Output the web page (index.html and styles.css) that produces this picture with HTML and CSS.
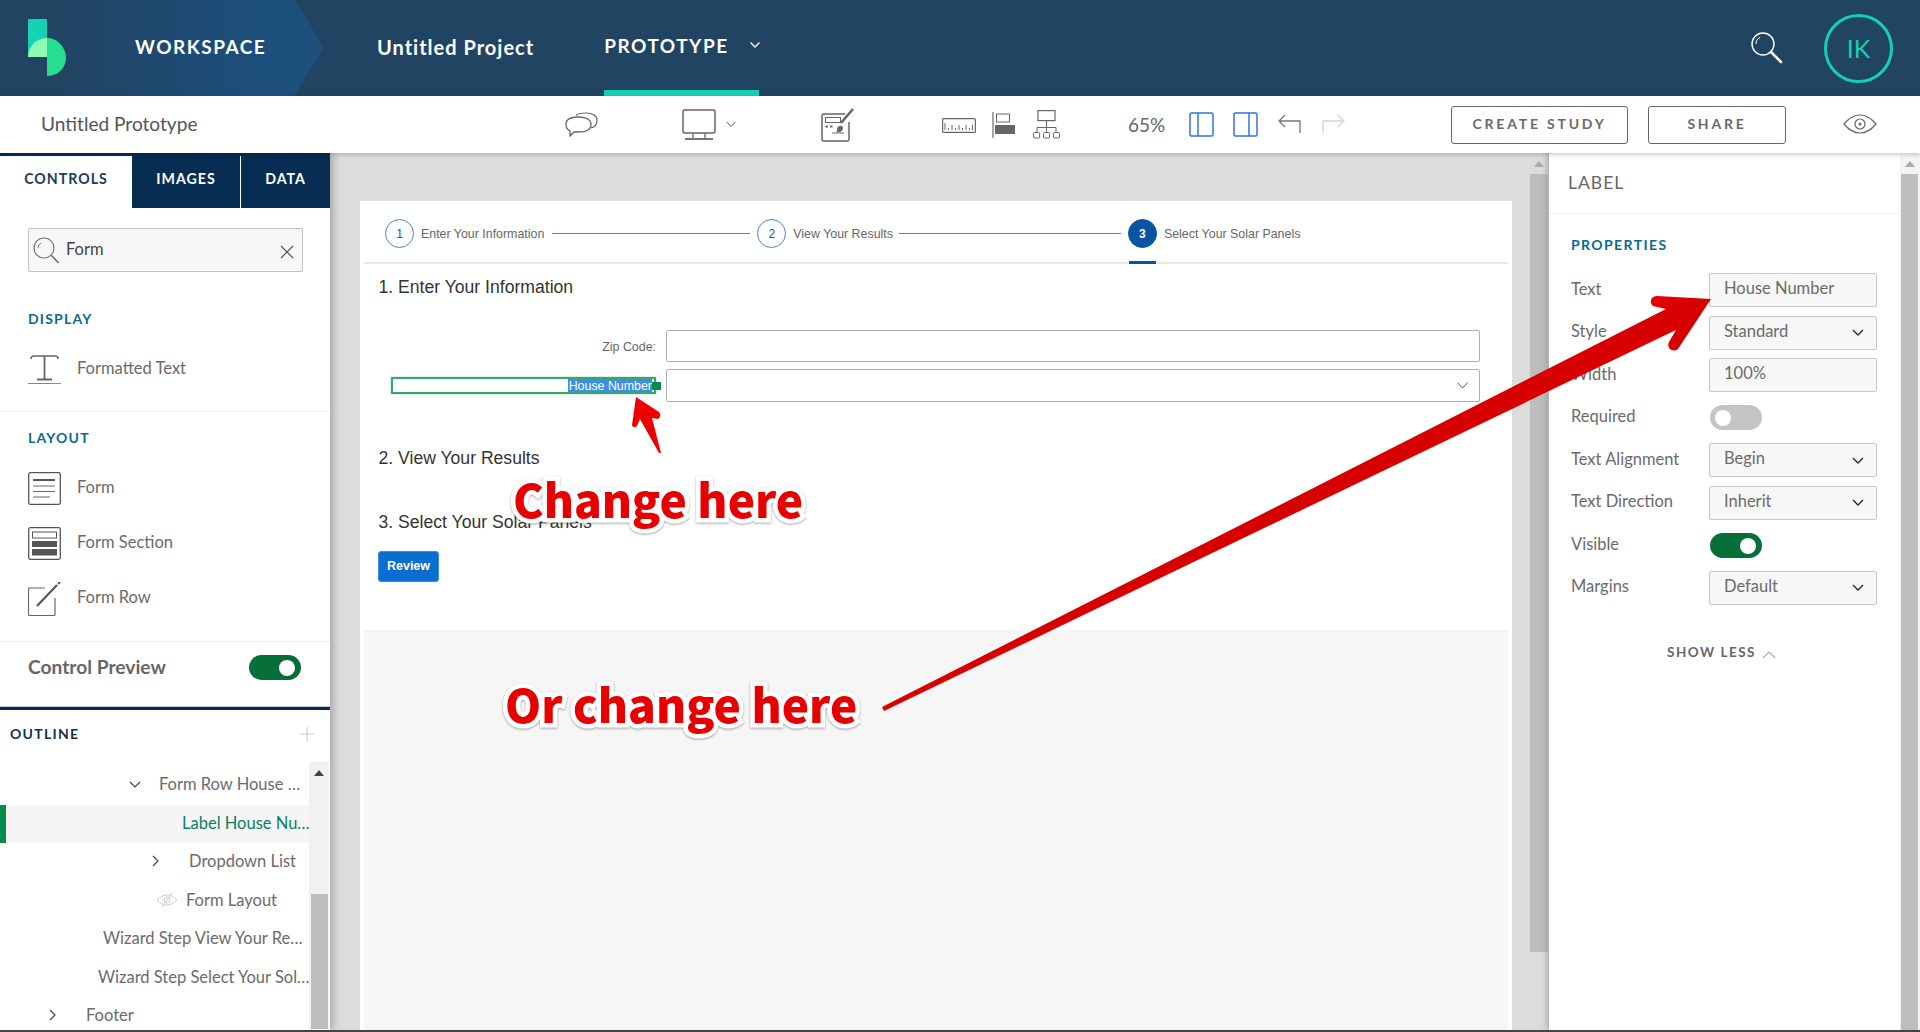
FILE: index.html
```html
<!DOCTYPE html>
<html lang="en">
<head>
<meta charset="utf-8">
<title>Untitled Prototype</title>
<link rel="stylesheet" href="styles.css">
</head>
<body>
<div class="app">
  <header class="topbar">
    <div class="brand">
      <svg class="logo" width="38" height="57" viewBox="0 0 38 57"><rect width="19" height="38" rx="1" fill="#14d3b4"/><path d="M19 19A19 19 0 0 0 0 38H19Z" fill="#8efab0"/><path d="M19 19C30 19 38 29 38 39C38 49 30 57 19 57Z" fill="#27dd90"/></svg>
      <span class="brand-name">WORKSPACE</span>
    </div>
    <span class="project">Untitled Project</span>
    <div class="proto-tab"><span>PROTOTYPE</span><svg width="12" height="8" viewBox="0 0 12 8"><path d="M1.500 1.500 6 6l4.500-4.500" fill="none" stroke="#fff" stroke-width="1.300"/></svg></div>
    <svg class="top-search" width="33" height="33" viewBox="0 0 33 33"><circle cx="13" cy="13" r="11" fill="none" stroke="#fff" stroke-width="1.400"/><path d="M6 13a7 7 0 0 1 4-6.500" fill="none" stroke="#fff" stroke-width="1"/><path d="M21 21 31 31" stroke="#fff" stroke-width="2.600" stroke-linecap="round"/></svg>
    <div class="avatar">IK</div>
  </header>

  <div class="toolbar">
    <span class="doc-title">Untitled Prototype</span>
    <svg class="i-comment" width="33" height="25" viewBox="0 0 33 25"><path d="M11 3.500C13 1.500 16 1 21 1c7 0 11 3 11 7 0 4-2 7-6 8" fill="none" stroke="#666" stroke-width="1.200"/><path d="M13 5c7 0 13 2 13 7.500S20 20 13 20H9l-4 4v-5C2 17.500 1 15 1 12.500 1 7 6 5 13 5Z" fill="#fff" stroke="#666" stroke-width="1.300"/></svg>
    <svg class="i-monitor" width="34" height="31" viewBox="0 0 34 31"><rect x="1" y="1" width="32" height="23" rx="1.500" fill="none" stroke="#666" stroke-width="1.500"/><path d="M11 24v6M23 24v6" stroke="#666" stroke-width="1.300"/><path d="M3 30h28" stroke="#666" stroke-width="1.800"/></svg>
    <svg class="i-caret" width="10" height="7" viewBox="0 0 10 7"><path d="M.8 1 5 5.500 9.200 1" fill="none" stroke="#555" stroke-width="1"/></svg>
    <svg class="i-paint" width="33" height="34" viewBox="0 0 33 34"><path d="M28 14v17.500a1.500 1.500 0 0 1-1.500 1.500H2.500A1.500 1.500 0 0 1 1 31.500V7.500A1.500 1.500 0 0 1 2.500 6H24" fill="none" stroke="#666" stroke-width="1.500"/><rect x="4.500" y="9.500" width="15" height="5" fill="none" stroke="#666"/><path d="M4.500 18.500h2.500M9 18.500h2.500" stroke="#666" stroke-width="2"/><path d="M32 1 20 15" stroke="#666" stroke-width="2.600"/><path d="M16 20c2-3 6-3 6 0 0 3-3 5-7 4 2-1 1-2 1-4Z" fill="#666"/><path d="M11 25h12" stroke="#666"/></svg>
    <svg class="i-ruler" width="34" height="15" viewBox="0 0 34 15"><rect x=".6" y=".6" width="32.800" height="13.800" rx="1" fill="none" stroke="#666" stroke-width="1.200"/><path d="M3 5v7M6.500 10v2M10 7v5M13.500 10v2M17 7v5M20.500 10v2M24 7v5M27.500 10v2M30.500 7v5" stroke="#666"/></svg>
    <svg class="i-align" width="23" height="26" viewBox="0 0 23 26"><path d="M1 0v26" stroke="#777" stroke-width="1.300"/><rect x="4.500" y="2" width="13" height="8" fill="none" stroke="#666"/><rect x="3" y="13" width="20" height="9" fill="#666"/></svg>
    <svg class="i-sitemap" width="27" height="29" viewBox="0 0 27 29"><rect x="5" y=".6" width="17" height="10" fill="none" stroke="#666" stroke-width="1.200"/><path d="M13.500 11v6M4 22v-4.500h19V22M13.500 17v5" fill="none" stroke="#666"/><rect x=".6" y="22.500" width="6" height="5.500" rx="1" fill="none" stroke="#666"/><rect x="10.500" y="22.500" width="6" height="5.500" rx="1" fill="none" stroke="#666"/><rect x="20.400" y="22.500" width="6" height="5.500" rx="1" fill="none" stroke="#666"/></svg>
    <span class="zoom-pct">65%</span>
    <svg class="i-panel-l" width="25" height="25" viewBox="0 0 25 25"><rect x="1" y="1" width="23" height="23" rx="1.500" fill="none" stroke="#2f75e0" stroke-width="1.500"/><path d="M9 1v23" stroke="#2f75e0" stroke-width="1.500"/></svg>
    <svg class="i-panel-r" width="25" height="25" viewBox="0 0 25 25"><rect x="1" y="1" width="23" height="23" rx="1.500" fill="none" stroke="#2f75e0" stroke-width="1.500"/><path d="M16 1v23" stroke="#2f75e0" stroke-width="1.500"/></svg>
    <svg class="i-undo" width="23" height="20" viewBox="0 0 23 20"><path d="M22 19V7H1M7 1 1 7l6 6" fill="none" stroke="#777" stroke-width="1.300"/></svg>
    <svg class="i-redo" width="23" height="20" viewBox="0 0 23 20"><path d="M1 19V7h21M16 1l6 6-6 6" fill="none" stroke="#d4d4d4" stroke-width="1.300"/></svg>
    <button class="tool-btn btn-study">CREATE STUDY</button>
    <button class="tool-btn btn-share">SHARE</button>
    <svg class="i-eye" width="34" height="20" viewBox="0 0 34 20"><path d="M1 10C6 4 11 1 17 1s11 3 16 9c-5 6-10 9-16 9S6 16 1 10Z" fill="none" stroke="#666" stroke-width="1.200"/><circle cx="17" cy="10" r="5" fill="none" stroke="#666" stroke-width="1.200"/><circle cx="17" cy="10" r="1.500" fill="#3a6fc0"/></svg>
  </div>

  <main class="workspace">
    <aside class="sidebar">
      <div class="tabs">
        <span class="tab tab-controls">CONTROLS</span>
        <span class="tab tab-images">IMAGES</span>
        <span class="tab tab-data">DATA</span>
      </div>
      <div class="search-wrap">
        <div class="search-box">
          <svg width="26" height="27" viewBox="0 0 26 27"><circle cx="11" cy="11" r="10" fill="none" stroke="#777" stroke-width="1.200"/><path d="M5 11a6 6 0 0 1 3-5" fill="none" stroke="#777"/><path d="m18 18 7.500 8" stroke="#777" stroke-width="1.800"/></svg>
          <span class="search-text">Form</span>
          <svg class="search-x" width="14" height="14" viewBox="0 0 14 14"><path d="m1 1 12 12M13 1 1 13" stroke="#555" stroke-width="1.200"/></svg>
        </div>
      </div>
      <section class="group group-display">
        <h3 class="group-title">DISPLAY</h3>
        <div class="ctrl">
          <svg width="33" height="32" viewBox="0 0 33 32"><path d="M3 6c0-2 1-3 3-3h21c2 0 3 1 3 3" fill="none" stroke="#666" stroke-width="1.500"/><path d="M16.500 3v23" stroke="#666" stroke-width="1.800"/><path d="M9 26.500h15" stroke="#666" stroke-width="2"/><path d="M0 30.500h33" stroke="#888" stroke-width="1.200"/></svg>
          <span>Formatted Text</span>
        </div>
      </section>
      <section class="group group-layout">
        <h3 class="group-title">LAYOUT</h3>
        <div class="ctrl-list">
          <div class="ctrl">
            <svg width="33" height="33" viewBox="0 0 33 33"><rect x=".7" y=".7" width="31.600" height="31.600" rx="1.500" fill="none" stroke="#555" stroke-width="1.300"/><path d="M5 8h22" stroke="#555" stroke-width="2"/><path d="M5 14h22M5 19.500h22M5 25h17" stroke="#666" stroke-width="1.200"/></svg>
            <span>Form</span>
          </div>
          <div class="ctrl">
            <svg width="33" height="33" viewBox="0 0 33 33"><rect x=".7" y=".7" width="31.600" height="31.600" rx="1.500" fill="none" stroke="#555" stroke-width="1.300"/><rect x="4.500" y="5" width="24" height="6" fill="none" stroke="#555"/><rect x="4" y="14" width="25" height="6" fill="#555"/><rect x="4" y="22" width="25" height="6.500" fill="#555"/></svg>
            <span>Form Section</span>
          </div>
          <div class="ctrl">
            <svg width="33" height="34" viewBox="0 0 33 34"><path d="M17 6H1.500a1 1 0 0 0-1 1v25.500a1 1 0 0 0 1 1H26a1 1 0 0 0 1-1V16" fill="none" stroke="#666" stroke-width="1.200"/><path d="M9 24 29 3" stroke="#555" stroke-width="2.200"/><path d="m30 2 2-2" stroke="#555" stroke-width="2"/></svg>
            <span>Form Row</span>
          </div>
        </div>
      </section>
      <div class="preview-row">
        <span class="preview-label">Control Preview</span>
        <span class="switch switch-on"></span>
      </div>
      <div class="outline-head">
        <span class="outline-title">OUTLINE</span>
        <svg width="14" height="14" viewBox="0 0 14 14"><path d="M7 0v14M0 7h14" stroke="#ccc" stroke-width="1.200"/></svg>
      </div>
      <div class="tree">
        <div class="tree-rows">
          <div class="tree-row lvl-formrow"><svg class="tw-open" width="12" height="7" viewBox="0 0 12 7"><path d="M1 1l5 5 5-5" fill="none" stroke="#444" stroke-width="1.200"/></svg><span>Form Row House …</span></div>
          <div class="tree-row tree-active"><span>Label House Nu…</span></div>
          <div class="tree-row lvl-dropdown"><svg class="tw-closed" width="7" height="12" viewBox="0 0 7 12"><path d="M1 1l5 5-5 5" fill="none" stroke="#444" stroke-width="1.200"/></svg><span>Dropdown List</span></div>
          <div class="tree-row lvl-layout"><svg class="tw-eye" width="22" height="16" viewBox="0 0 22 16"><path d="M1 8c3-3 6-5 10-5s7 2 10 5c-3 3-6 5-10 5S4 11 1 8Z" fill="none" stroke="#ccc"/><circle cx="11" cy="8" r="3" fill="none" stroke="#ccc"/><path d="M16 1 6 15" stroke="#ccc"/></svg><span>Form Layout</span></div>
          <div class="tree-row lvl-view"><span>Wizard Step View Your Re…</span></div>
          <div class="tree-row lvl-select"><span>Wizard Step Select Your Sol…</span></div>
          <div class="tree-row lvl-footer"><svg class="tw-footer" width="7" height="12" viewBox="0 0 7 12"><path d="M1 1l5 5-5 5" fill="none" stroke="#444" stroke-width="1.200"/></svg><span>Footer</span></div>
        </div>
        <div class="sbar sbar-tree"><i class="sbar-up sbar-up-dark"></i><b class="thumb thumb-tree"></b></div>
      </div>
    </aside>

    <section class="canvas">
      <div class="stage">
        <div class="page">
          <div class="stepper">
            <span class="step-num">1</span><span class="step-text">Enter Your Information</span><span class="step-line line-a"></span>
            <span class="step-num">2</span><span class="step-text">View Your Results</span><span class="step-line line-b"></span>
            <span class="step-num step-current">3</span><span class="step-text">Select Your Solar Panels</span>
          </div>
          <div class="page-body">
            <h2 class="sec sec-1">1. Enter Your Information</h2>
            <div class="form-row form-row-zip">
              <label class="zip-label">Zip Code:</label>
              <div class="field"></div>
            </div>
            <div class="form-row form-row-house">
              <div class="edit-label"><span class="sel">House <u class="typo">Number</u></span><i class="handle"></i></div>
              <div class="field field-select"><svg width="11" height="7" viewBox="0 0 11 7"><path d="M.6.8 5.500 6 10.400.8" fill="none" stroke="#2a5a9a" stroke-width="1"/></svg></div>
            </div>
            <h2 class="sec sec-2">2. View Your Results</h2>
            <h2 class="sec sec-3">3. Select Your Solar Panels</h2>
            <button class="review">Review</button>
          </div>
          <div class="page-footer"></div>
        </div>
      </div>
      <div class="sbar sbar-canvas"><i class="sbar-up"></i><b class="thumb thumb-canvas"></b></div>
    </section>

    <aside class="props">
      <div class="props-main">
        <div class="props-head">LABEL</div>
        <h3 class="props-title">PROPERTIES</h3>
        <div class="props-grid">
          <span class="pl">Text</span><div class="pf">House Number</div>
          <span class="pl">Style</span><div class="pf pf-select">Standard<svg width="12" height="7" viewBox="0 0 12 7"><path d="M1 1l5 5 5-5" fill="none" stroke="#222" stroke-width="1.300"/></svg></div>
          <span class="pl">Width</span><div class="pf">100%</div>
          <span class="pl">Required</span><span class="switch switch-off"></span>
          <span class="pl">Text Alignment</span><div class="pf pf-select">Begin<svg width="12" height="7" viewBox="0 0 12 7"><path d="M1 1l5 5 5-5" fill="none" stroke="#222" stroke-width="1.300"/></svg></div>
          <span class="pl">Text Direction</span><div class="pf pf-select">Inherit<svg width="12" height="7" viewBox="0 0 12 7"><path d="M1 1l5 5 5-5" fill="none" stroke="#222" stroke-width="1.300"/></svg></div>
          <span class="pl">Visible</span><span class="switch switch-on"></span>
          <span class="pl">Margins</span><div class="pf pf-select">Default<svg width="12" height="7" viewBox="0 0 12 7"><path d="M1 1l5 5 5-5" fill="none" stroke="#222" stroke-width="1.300"/></svg></div>
        </div>
        <div class="show-less"><span>SHOW LESS</span><svg width="14" height="9" viewBox="0 0 14 9"><path d="M1 8l6-6 6 6" fill="none" stroke="#aaa" stroke-width="1.200"/></svg></div>
      </div>
      <div class="sbar sbar-props"><i class="sbar-up"></i><b class="thumb thumb-props"></b></div>
    </aside>
  </main>
  <div class="baseline"></div>
</div>

<svg class="arrows" width="1920" height="1032" viewBox="0 0 1920 1032">
  <defs>
    <linearGradient id="redfade" gradientUnits="userSpaceOnUse" x1="1370" y1="420" x2="1386" y2="452"><stop offset="0" stop-color="#f40000"/><stop offset=".6" stop-color="#e80000"/><stop offset="1" stop-color="#d60000"/></linearGradient>
  </defs>
  <path class="arrow-big" d="M882 707 1666 309 1653 306Q1649 302 1652 298 1654 296 1657 296L1711 299 1678 349Q1674 352 1670 349 1667 346 1669 342L1676 330 884 711Z"/>
  <path class="arrow-small" d="M636 397 659 412Q662 416 658 419L652 418 661 453 659 453 640 419 637 426Q633 429 632 425Z"/>
</svg>
<div class="note note-one">Change here</div>
<div class="note note-two">Or change here</div>
</body>
</html>
```

FILE: styles.css
```css
* { box-sizing: border-box; }
html, body { margin: 0; height: 100%; overflow: hidden; }
body { font-family: "Lato", "Liberation Sans", sans-serif; color: #666; background: #fff; position: relative; }
h2, h3 { margin: 0; font-weight: normal; }
svg { display: block; flex: none; }
.app { display: flex; flex-direction: column; height: 1032px; }

/* top bar */
.topbar { height: 96px; flex: none; background: #214463; display: flex; align-items: center; color: #fff; }
.brand { width: 324px; height: 96px; display: flex; align-items: center; padding-left: 28px; background: linear-gradient(90deg, #214463 20%, #1c4f7c 80%); clip-path: polygon(0 0, 295px 0, 324px 48px, 294px 96px, 0 96px); }
.logo { margin-top: -1px; }
.brand-name { margin-left: 69px; margin-top: -4px; font-size: 19px; font-weight: 700; letter-spacing: 1.500px; }
.project { margin-left: 53px; margin-top: -2px; font-size: 20px; font-weight: 700; letter-spacing: 1px; }
.proto-tab { margin-left: 70px; width: 155px; height: 96px; border-bottom: 6px solid #16cfb1; display: flex; align-items: center; gap: 20px; font-size: 19px; font-weight: 700; letter-spacing: 1.500px; }
.top-search { margin-left: auto; margin-right: 41px; margin-top: -2px; }
.avatar { width: 69px; height: 69px; margin-right: 27px; border: 3px solid #14cfb0; border-radius: 50%; display: flex; align-items: center; justify-content: center; font-size: 25px; color: #14cfb0; }

/* tool bar */
.toolbar { height: 57px; flex: none; display: flex; align-items: center; padding-left: 41px; background: #fff; box-shadow: 0 2px 4px rgba(0,0,0,.18); position: relative; z-index: 3; }
.doc-title { width: 524px; padding-bottom: 2px; font-size: 19.100px; color: #555; }
.i-monitor { margin-left: 84px; }
.i-caret { margin-left: 10px; margin-top: -1px; }
.i-paint { margin-left: 85px; }
.i-ruler { margin-left: 88px; margin-top: 1px; }
.i-align { margin-left: 16px; }
.i-sitemap { margin-left: 18px; }
.zoom-pct { margin-left: 68px; width: 61px; font-size: 19px; color: #666; }
.i-panel-r { margin-left: 19px; }
.i-undo { margin-left: 20px; margin-top: -2px; }
.i-redo { margin-left: 21px; margin-top: -2px; }
.tool-btn { height: 38px; font-family: inherit; font-size: 14px; font-weight: 700; letter-spacing: 2.800px; color: #6a6a6a; background: #fff; border: 1px solid #666; border-radius: 3px; padding: 0 0 2px; }
.btn-study { width: 177px; margin-left: 106px; }
.btn-share { width: 138px; margin-left: 20px; }
.i-eye { margin-left: 57px; margin-top: -1px; }

/* body */
.workspace { flex: 1; min-height: 0; display: flex; }

/* left */
.sidebar { width: 330px; flex: none; display: flex; flex-direction: column; background: #fff; box-shadow: 3px 0 8px rgba(0,0,0,.25); position: relative; z-index: 2; overflow: hidden; }
.tabs { height: 55px; flex: none; display: flex; background: #082d52; border-top: 3px solid #082d52; }
.tab { display: flex; align-items: center; justify-content: center; font-size: 14.200px; font-weight: 700; letter-spacing: 1px; color: #fff; padding-bottom: 8px; }
.tab-controls { width: 132px; background: #fff; color: #1a3e60; }
.tab-images { width: 108px; }
.tab-data { flex: 1; border-left: 1px solid #fff; }
.search-wrap { padding: 20px 27px 0 28px; flex: none; }
.search-box { height: 44px; background: #f7f7f7; border: 1px solid #c0c0c0; border-radius: 2px; display: flex; align-items: center; padding: 0 8px 0 4px; }
.search-text { margin-left: 7px; font-size: 16.500px; color: #444; margin-top: -3px; }
.search-x { margin-left: auto; margin-top: 3px; }
.group { flex: none; border-bottom: 1px solid #eee; padding: 0 28px 26px; }
.group-display { padding-top: 38px; }
.group-layout { padding-top: 17px; }
.group-title { height: 18px; font-size: 14px; line-height: 18px; font-weight: 700; letter-spacing: 1.200px; color: #0a6a8f; }
.ctrl { display: flex; align-items: center; gap: 16px; font-size: 16.500px; color: #6b6b6b; height: 33px; }
.ctrl span { padding-bottom: 3px; }
.group-display .ctrl { margin-top: 25px; height: 32px; }
.ctrl-list { margin-top: 25px; display: flex; flex-direction: column; gap: 22px; }
.preview-row { height: 65px; flex: none; padding: 0 29px 13px 28px; display: flex; align-items: center; justify-content: space-between; font-size: 19.200px; font-weight: 700; color: #666; border-bottom: 1px solid #ccc; }
.preview-label { padding-bottom: 2px; }
.switch { display: block; width: 52px; height: 25px; border-radius: 13px; position: relative; }
.switch::after { content: ""; position: absolute; top: 5px; width: 16px; height: 16px; border-radius: 50%; background: #fff; }
.switch-on { background: #056f37; }
.switch-on::after { right: 6px; }
.switch-off { background: #c4c4c4; }
.switch-off::after { left: 5px; }
.outline-head { height: 55px; flex: none; border-top: 3px solid #082d52; padding: 0 16px 5px 10px; display: flex; align-items: center; justify-content: space-between; }
.outline-title { font-size: 14px; font-weight: 700; letter-spacing: 1.300px; color: #12304e; }
.tree { flex: 1; min-height: 0; display: flex; }
.tree-rows { width: 309px; padding-top: 4px; }
.tree-row { height: 38.500px; display: flex; align-items: center; white-space: nowrap; font-size: 16.500px; color: #6b6b6b; padding-bottom: 2px; }
.tree-active { height: 38px; margin-bottom: .5px; background: #f5f5f5; border-left: 6px solid #078a4b; padding-left: 176px; padding-bottom: 1px; color: #0a7f62; overflow: hidden; }
.lvl-formrow { padding-left: 129px; }
.tw-open { margin-right: 18px; }
.lvl-dropdown { padding-left: 152px; }
.tw-closed { margin-right: 30px; }
.lvl-layout { padding-left: 156px; }
.tw-eye { margin-right: 8px; }
.lvl-view { padding-left: 103px; }
.lvl-select { padding-left: 98px; }
.lvl-footer { padding-left: 49px; }
.tw-footer { margin-right: 30px; }

/* scrollbars */
.sbar { position: relative; flex: none; }
.sbar-up { display: block; width: 0; height: 0; margin: 0 auto; border-left: 5px solid transparent; border-right: 5px solid transparent; border-bottom: 6px solid #aaa; }
.sbar-up-dark { border-bottom-color: #444; }
.thumb { display: block; background: #bdbdbd; }
.sbar-tree { width: 20px; margin-right: 1px; background: #f1f1f1; padding-top: 8px; }
.thumb-tree { height: 135px; margin: 118px 1px 0 2px; }
.sbar-canvas { width: 19px; background: #dcdcdc; padding: 8px 1px 0 0; box-shadow: inset -5px 0 4px -3px rgba(0,0,0,.1); }
.thumb-canvas { height: 778px; margin-top: 7px; }
.sbar-props { width: 20px; background: #f4f4f4; padding-top: 8px; }
.thumb-props { height: 860px; margin: 7px 2px 0 1px; }

/* canvas */
.canvas { flex: 1; min-width: 0; display: flex; }
.stage { flex: 1; min-width: 0; background: #dcdcdc; padding: 48px 18px 0 30px; }
.page { height: 100%; background: #fff; padding: 4px 4px 0; display: flex; flex-direction: column; }
.stepper { height: 59px; flex: none; border-bottom: 2px solid #e6e6e6; display: flex; align-items: center; padding: 0 0 0 21px; font-family: "Liberation Sans", sans-serif; position: relative; }
.step-num { width: 29px; height: 29px; border: 1px solid #4a86c0; border-radius: 50%; display: flex; align-items: center; justify-content: center; font-size: 12px; color: #0a5ea8; flex: none; }
.step-text { margin-left: 7px; font-size: 12.400px; color: #666; white-space: nowrap; }
.step-line { height: 1px; background: #4a86c0; margin: 0 7px 0 8px; flex: none; }
.line-a { width: 198px; }
.line-b { width: 222px; margin-left: 6px; }
.step-current { background: #0a54a3; color: #fff; font-weight: 700; border-color: #0a54a3; position: relative; }
.step-current::after { content: ""; position: absolute; left: 0; right: 0; top: 41px; height: 3px; background: #0a54a3; }
.page-body { flex: none; padding: 0 28px 0 14.500px; font-family: "Liberation Sans", sans-serif; }
.sec { font-size: 17.600px; line-height: 24px; color: #333; }
.sec-1 { margin-top: 11px; }
.sec-2 { margin-top: 44px; }
.sec-3 { margin-top: 40px; }
.form-row { display: grid; grid-template-columns: 277.500px 1fr; column-gap: 10px; align-items: center; }
.form-row-zip { height: 32px; margin-top: 31px; }
.form-row-house { height: 33px; margin-top: 7px; }
.zip-label { text-align: right; font-size: 12.400px; color: #666; padding-top: 2px; }
.field { height: 100%; border: 1px solid #b0b0b0; border-radius: 2px; background: #fff; }
.field-select { display: flex; align-items: center; justify-content: flex-end; padding-right: 11px; }
.edit-label { margin-left: 12.500px; height: 17px; border: 2px solid #3aa56f; display: flex; justify-content: flex-end; align-items: center; padding-right: 2px; position: relative; font-size: 12.400px; color: #fff; box-shadow: 0 0 2px rgba(60,170,110,.5); }
.sel { background: #3d8ee6; height: 13px; line-height: 15px; width: 84px; white-space: nowrap; text-align: right; overflow: hidden; }
.typo { text-decoration: underline wavy #e02020 1px; }
.handle { position: absolute; right: -7px; top: 3px; width: 9px; height: 8px; background: #078a4b; }
.review { display: block; margin-top: 17px; margin-left: -.5px; width: 61px; height: 31px; background: #0a6ed1; color: #fff; border: 1px solid #3d8ee6; border-radius: 3px; font-family: "Liberation Sans", sans-serif; font-size: 12.500px; font-weight: 700; padding: 0 0 2px; }
.page-footer { flex: 1; margin-top: 48px; background: #f6f6f6; }

/* right */
.props { width: 371px; flex: none; display: flex; background: #fff; box-shadow: -3px 0 6px rgba(0,0,0,.12); position: relative; z-index: 1; }
.props-main { flex: 1; min-width: 0; }
.props-head { height: 61px; padding: 0 19px 2px; display: flex; align-items: center; font-size: 17.500px; letter-spacing: 1px; color: #666; border-bottom: 1px solid #f0f0f0; }
.props-title { margin: 22px 0 0 22px; height: 18px; font-size: 14px; line-height: 18px; font-weight: 700; letter-spacing: 1.400px; color: #0a6a8f; }
.props-grid { margin: 19px 0 0 22px; display: grid; grid-template-columns: 138px 168px; grid-auto-rows: 34px; row-gap: 8.500px; align-items: center; font-size: 16.500px; color: #6b6b6b; }
.pl { padding-bottom: 3px; }
.pf { height: 34px; background: #f7f7f7; border: 1px solid #c8c8c8; border-radius: 2px; padding: 0 12px 4px 14px; display: flex; align-items: center; justify-content: space-between; color: #6b6b6b; }
.pf-select svg { margin-top: 4px; }
.props-grid .switch { margin-left: 1px; }
.show-less { margin-top: 39px; padding-left: 118px; display: flex; align-items: center; gap: 6px; font-size: 13.500px; font-weight: 700; letter-spacing: 1.500px; color: #666; }
.show-less svg { margin-top: 5px; }
.baseline { height: 2px; flex: none; background: #444; position: relative; z-index: 4; }

/* annotations */
.arrows { position: absolute; left: 0; top: 0; z-index: 6; pointer-events: none; }
.arrow-big { fill: url(#redfade); }
.arrow-small { fill: #ee0000; }
.note { position: absolute; z-index: 7; font-family: "Noto Sans CJK JP", "Noto Sans", sans-serif; font-weight: 900; font-size: 46px; line-height: 60px; color: #e60000; white-space: nowrap; -webkit-text-stroke: 9px #fff; paint-order: stroke fill; filter: drop-shadow(0 1px 1px rgba(0,0,0,.35)); }
.note-one { left: 513px; top: 468px; }
.note-two { left: 505px; top: 673px; }
```
